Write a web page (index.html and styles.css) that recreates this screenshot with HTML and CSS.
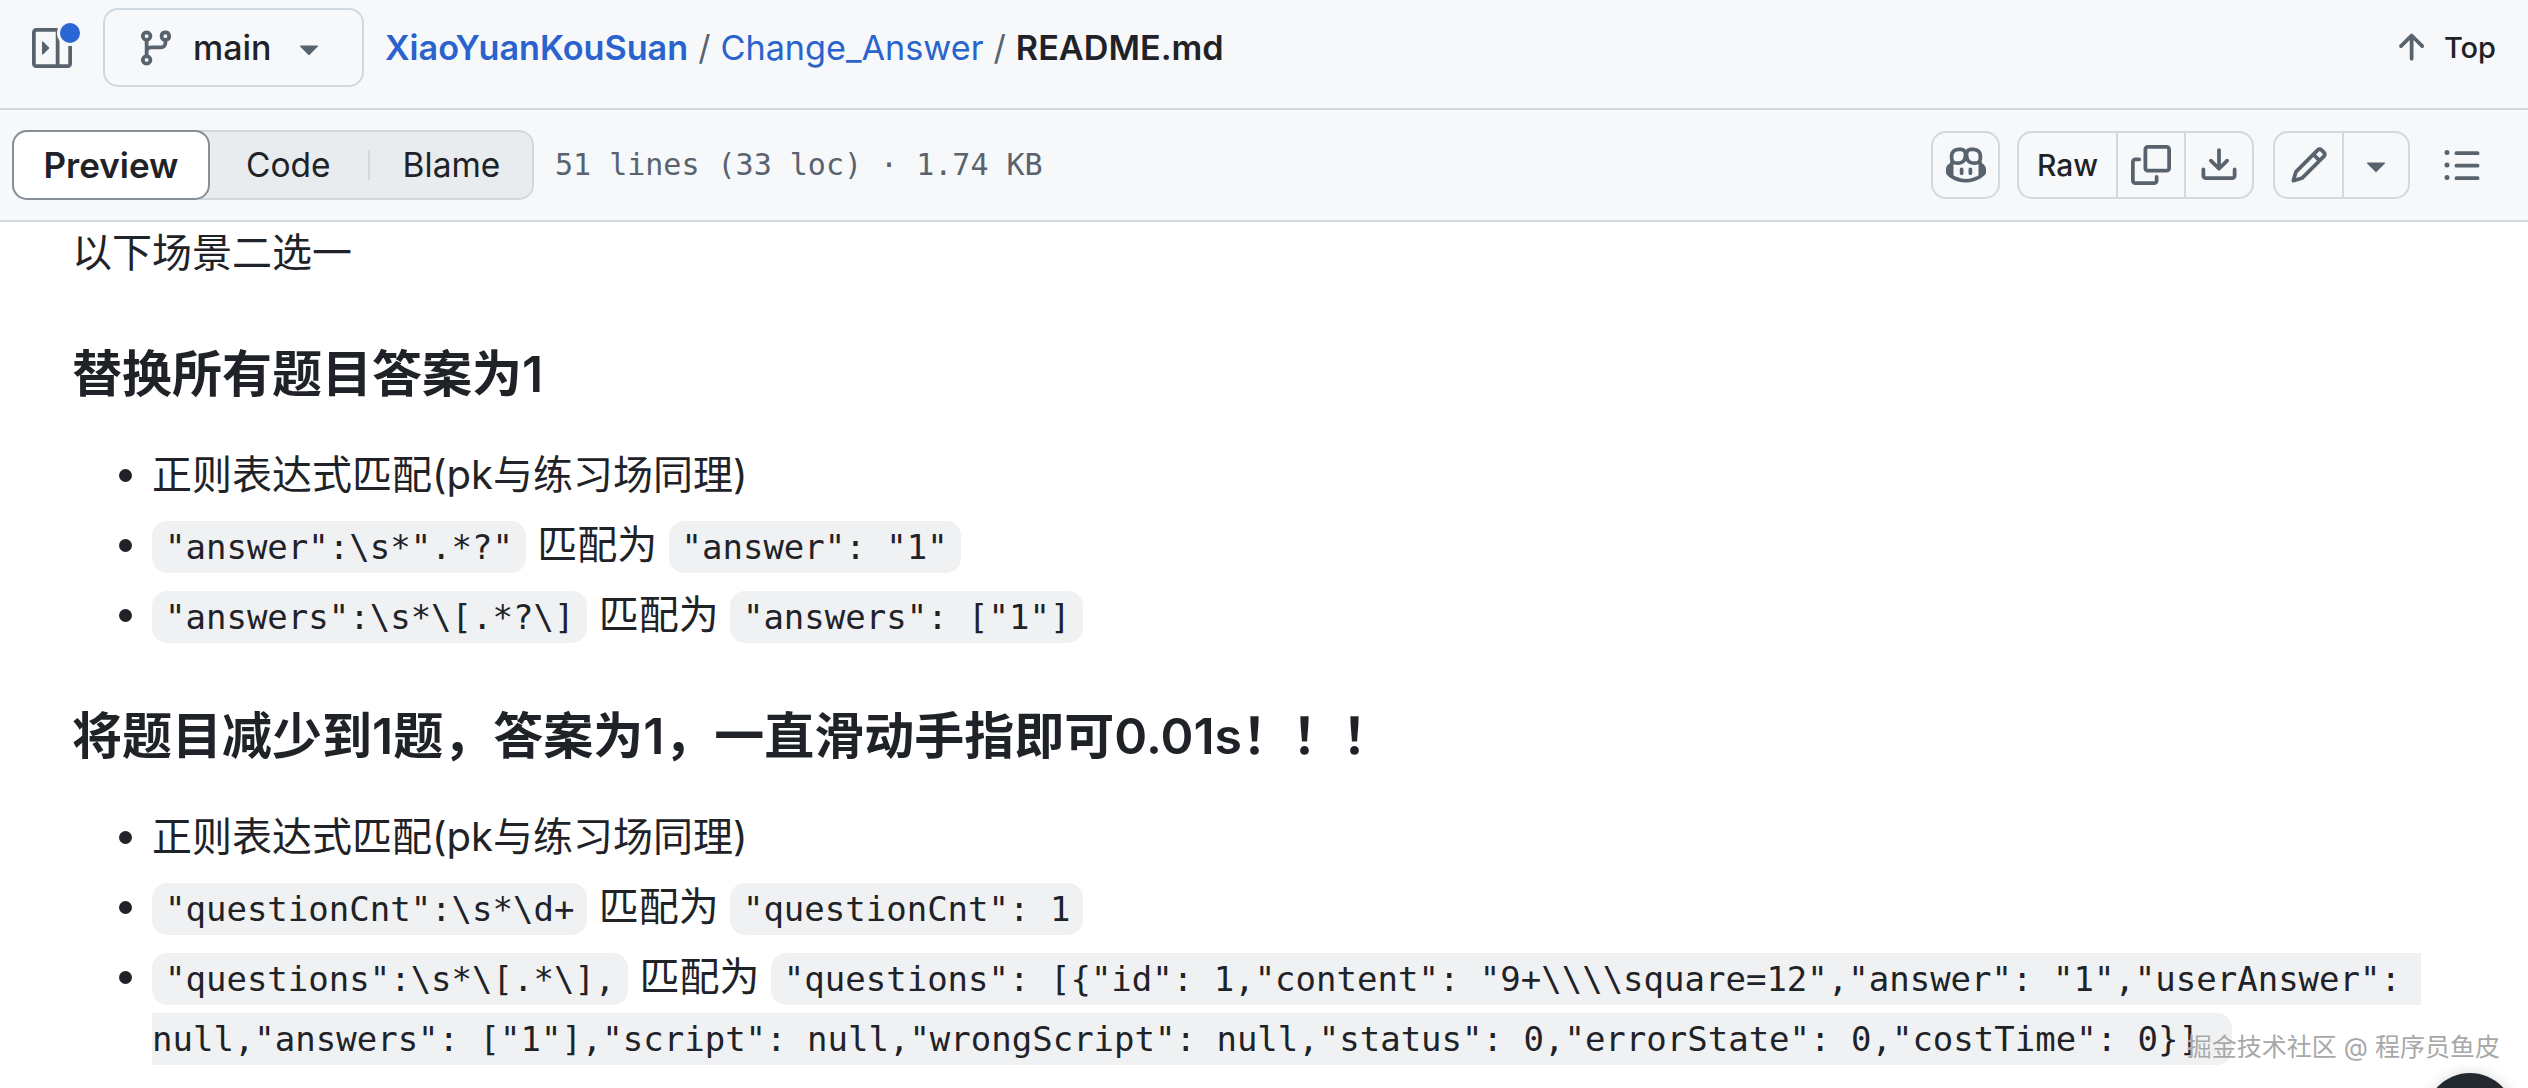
FILE: index.html
```html
<!DOCTYPE html>
<html lang="zh-CN">
<head>
  <meta charset="UTF-8">
  <title>Change_Answer/README.md at main</title>
  <link rel="stylesheet" href="styles.css">
</head>
<body>

  <header class="topbar">
    <div class="side-toggle">
      <svg class="icon muted" viewBox="0 0 16 16"><path d="M6.823 7.823a.25.25 0 0 1 0 .354l-2.396 2.396A.25.25 0 0 1 4 10.396V5.604a.25.25 0 0 1 .427-.177Z"/><path d="M1.75 0h12.5C15.216 0 16 .784 16 1.75v12.5A1.75 1.75 0 0 1 14.25 16H1.75A1.75 1.75 0 0 1 0 14.25V1.75C0 .784.784 0 1.75 0ZM1.5 1.75v12.5c0 .138.112.25.25.25H9.5v-13H1.75a.25.25 0 0 0-.25.25ZM11 14.5h3.25a.25.25 0 0 0 .25-.25V1.75a.25.25 0 0 0-.25-.25H11Z"/></svg>
      <span class="dot"></span>
    </div>
    <div class="branch">
      <svg class="icon muted" viewBox="0 0 16 16"><path d="M9.5 3.25a2.25 2.25 0 1 1 3 2.122V6A2.5 2.5 0 0 1 10 8.5H6a1 1 0 0 0-1 1v1.128a2.251 2.251 0 1 1-1.5 0V5.372a2.25 2.25 0 1 1 1.5 0v1.836A2.493 2.493 0 0 1 6 7h4a1 1 0 0 0 1-1v-.628A2.25 2.25 0 0 1 9.5 3.25Zm-6 0a.75.75 0 1 0 1.5 0 .75.75 0 0 0-1.5 0Zm8.25-.75a.75.75 0 1 0 0 1.5.75.75 0 0 0 0-1.5ZM4.25 12a.75.75 0 1 0 0 1.5.75.75 0 0 0 0-1.5Z"/></svg>
      <span class="branch-name">main</span>
      <svg class="icon muted" viewBox="0 0 16 16"><path d="m4.427 7.427 3.396 3.396a.25.25 0 0 0 .354 0l3.396-3.396A.25.25 0 0 0 11.396 7H4.604a.25.25 0 0 0-.177.427Z"/></svg>
    </div>
    <nav class="crumbs">
      <a class="repo">XiaoYuanKouSuan</a><span class="sep">/</span><a>Change_Answer</a><span class="sep">/</span><strong>README.md</strong>
    </nav>
    <div class="top-link">
      <svg class="icon muted" viewBox="0 0 16 16"><path d="M3.47 7.78a.75.75 0 0 1 0-1.06l4.25-4.25a.75.75 0 0 1 1.06 0l4.25 4.25a.751.751 0 0 1-.018 1.042.751.751 0 0 1-1.042.018L9 4.81v7.44a.75.75 0 0 1-1.5 0V4.81L4.53 7.78a.75.75 0 0 1-1.06 0Z"/></svg>
      <span>Top</span>
    </div>
  </header>

  <section class="filebar">
    <div class="tabs">
      <span class="tab active">Preview</span>
      <span class="tab code-tab">Code</span>
      <span class="tab-sep"></span>
      <span class="tab blame-tab">Blame</span>
    </div>
    <span class="meta">51 lines (33 loc) · 1.74 KB</span>
    <div class="actions">
      <div class="btn-group copilot">
        <span class="btn">
          <svg class="icon muted" viewBox="0 0 16 16"><path d="M7.998 15.035c-4.562 0-7.873-2.914-7.998-3.749V9.338c.085-.628.677-1.686 1.588-2.065.013-.07.024-.143.036-.218.029-.183.06-.384.126-.612-.201-.508-.254-1.084-.254-1.656 0-.87.128-1.769.693-2.484.579-.733 1.494-1.124 2.724-1.261 1.206-.134 2.262.034 2.944.765.05.053.096.108.139.165.044-.057.094-.112.143-.165.682-.731 1.738-.899 2.944-.765 1.23.137 2.145.528 2.724 1.261.566.715.693 1.614.693 2.484 0 .572-.053 1.148-.254 1.656.066.228.098.429.126.612.012.076.024.148.037.218.924.385 1.522 1.471 1.591 2.095v1.872c0 .766-3.351 3.795-8.002 3.795Zm0-1.485c2.28 0 4.584-1.11 5.002-1.433V7.862l-.023-.116c-.49.21-1.075.291-1.727.291-1.146 0-2.059-.327-2.71-.991A3.222 3.222 0 0 1 8 6.303a3.24 3.24 0 0 1-.544.743c-.65.664-1.563.991-2.71.991-.652 0-1.236-.081-1.727-.291l-.023.116v4.255c.419.323 2.722 1.433 5.002 1.433ZM6.762 2.83c-.193-.206-.637-.413-1.682-.297-1.019.113-1.479.404-1.713.7-.247.312-.369.789-.369 1.554 0 .793.129 1.171.308 1.371.162.181.519.379 1.442.379.853 0 1.339-.235 1.638-.54.315-.322.527-.827.617-1.553.117-.935-.037-1.395-.241-1.614Zm4.155-.297c-1.044-.116-1.488.091-1.681.297-.204.219-.359.679-.242 1.614.091.726.303 1.231.618 1.553.299.305.784.54 1.638.54.922 0 1.28-.198 1.442-.379.179-.2.308-.578.308-1.371 0-.765-.123-1.242-.37-1.554-.233-.296-.693-.587-1.713-.7Z"/><path d="M6.25 9.037a.75.75 0 0 1 .75.75v1.501a.75.75 0 0 1-1.5 0V9.787a.75.75 0 0 1 .75-.75Zm4.25.75v1.501a.75.75 0 0 1-1.5 0V9.787a.75.75 0 0 1 1.5 0Z"/></svg>
        </span>
      </div>
      <div class="btn-group">
        <span class="btn raw">Raw</span>
        <span class="btn copy">
          <svg class="icon muted" viewBox="0 0 16 16"><path d="M0 6.75C0 5.784.784 5 1.75 5h1.5a.75.75 0 0 1 0 1.5h-1.5a.25.25 0 0 0-.25.25v7.5c0 .138.112.25.25.25h7.5a.25.25 0 0 0 .25-.25v-1.5a.75.75 0 0 1 1.5 0v1.5A1.75 1.75 0 0 1 9.25 16h-7.5A1.75 1.75 0 0 1 0 14.25Z"/><path d="M5 1.75C5 .784 5.784 0 6.75 0h7.5C15.216 0 16 .784 16 1.75v7.5A1.75 1.75 0 0 1 14.25 11h-7.5A1.75 1.75 0 0 1 5 9.25Zm1.75-.25a.25.25 0 0 0-.25.25v7.5c0 .138.112.25.25.25h7.5a.25.25 0 0 0 .25-.25v-7.5a.25.25 0 0 0-.25-.25Z"/></svg>
        </span>
        <span class="btn download">
          <svg class="icon muted" viewBox="0 0 16 16"><path d="M2.75 14A1.75 1.75 0 0 1 1 12.25v-2.5a.75.75 0 0 1 1.5 0v2.5c0 .138.112.25.25.25h10.5a.25.25 0 0 0 .25-.25v-2.5a.75.75 0 0 1 1.5 0v2.5A1.75 1.75 0 0 1 13.25 14Z"/><path d="M7.25 7.689V2a.75.75 0 0 1 1.5 0v5.689l1.97-1.969a.749.749 0 1 1 1.06 1.06l-3.25 3.25a.749.749 0 0 1-1.06 0L4.22 6.78a.749.749 0 1 1 1.06-1.06l1.97 1.969Z"/></svg>
        </span>
      </div>
      <div class="btn-group">
        <span class="btn edit">
          <svg class="icon muted" viewBox="0 0 16 16"><path d="M11.013 1.427a1.75 1.75 0 0 1 2.474 0l1.086 1.086a1.75 1.75 0 0 1 0 2.474l-8.61 8.61c-.21.21-.47.364-.756.445l-3.251.93a.75.75 0 0 1-.927-.928l.929-3.25c.081-.286.235-.547.445-.758l8.61-8.61Zm.176 4.823L9.75 4.81l-6.286 6.287a.253.253 0 0 0-.064.108l-.558 1.953 1.953-.558a.253.253 0 0 0 .108-.064Zm1.238-3.763a.25.25 0 0 0-.354 0L10.811 3.75l1.439 1.44 1.263-1.263a.25.25 0 0 0 0-.354Z"/></svg>
        </span>
        <span class="btn caret">
          <svg class="icon muted" viewBox="0 0 16 16"><path d="m4.427 7.427 3.396 3.396a.25.25 0 0 0 .354 0l3.396-3.396A.25.25 0 0 0 11.396 7H4.604a.25.25 0 0 0-.177.427Z"/></svg>
        </span>
      </div>
      <svg class="icon muted outline" viewBox="0 0 16 16"><path d="M5.75 2.5h8.5a.75.75 0 0 1 0 1.5h-8.5a.75.75 0 0 1 0-1.5Zm0 5h8.5a.75.75 0 0 1 0 1.5h-8.5a.75.75 0 0 1 0-1.5Zm0 5h8.5a.75.75 0 0 1 0 1.5h-8.5a.75.75 0 0 1 0-1.5ZM2 14a1 1 0 1 1 0-2 1 1 0 0 1 0 2Zm1-6a1 1 0 1 1-2 0 1 1 0 0 1 2 0ZM2 4a1 1 0 1 1 0-2 1 1 0 0 1 0 2Z"/></svg>
    </div>
  </section>

  <main class="markdown">
    <p>以下场景二选一</p>

    <h2>替换所有题目答案为1</h2>
    <ul>
      <li>正则表达式匹配(pk与练习场同理)</li>
      <li><code>"answer":\s*".*?"</code> 匹配为 <code>"answer": "1"</code></li>
      <li><code>"answers":\s*\[.*?\]</code> 匹配为 <code>"answers": ["1"]</code></li>
    </ul>

    <h2>将题目减少到1题，答案为1，一直滑动手指即可0.01s！！！</h2>
    <ul>
      <li>正则表达式匹配(pk与练习场同理)</li>
      <li><code>"questionCnt":\s*\d+</code> 匹配为 <code>"questionCnt": 1</code></li>
      <li><code>"questions":\s*\[.*\],</code> 匹配为 <code>"questions": [{"id": 1,"content": "9+\\\\square=12","answer": "1","userAnswer": null,"answers": ["1"],"script": null,"wrongScript": null,"status": 0,"errorState": 0,"costTime": 0}] </code></li>
    </ul>
  </main>

  <div class="watermark">掘金技术社区 @ 程序员鱼皮</div>
  <div class="float-btn"></div>

</body>
</html>
```

FILE: styles.css
```css
* {
  box-sizing: border-box;
}

html, body {
  margin: 0;
  height: 1088px;
  overflow: hidden;
}

body {
  position: relative;
  background: #fff;
  color: #1f2328;
  font-family: Inter, "Noto Sans CJK SC", sans-serif;
  font-size: 40px;
  line-height: 60px;
}

.icon {
  display: block;
  width: 40px;
  height: 40px;
  flex: none;
  fill: #59636e;
}

/* top bar */
.topbar {
  display: flex;
  align-items: flex-start;
  height: 110px;
  padding: 8px 32px 0;
  background: #f6f8fa;
  border-bottom: 2px solid #d1d9e0;
}

.side-toggle {
  position: relative;
  width: 40px;
  height: 40px;
  margin-top: 20px;
}

.dot {
  position: absolute;
  top: -8px;
  right: -11px;
  width: 20px;
  height: 20px;
  background: #2a66d4;
  border: 3px solid #f6f8fa;
  border-radius: 50%;
  box-sizing: content-box;
}

.branch {
  display: flex;
  align-items: center;
  width: 261px;
  height: 79px;
  margin-left: 31px;
  padding-left: 31px;
  border: 2px solid #d1d9e0;
  border-radius: 15px;
  font-size: 34px;
  font-weight: 500;
}

.branch-name {
  margin-left: 17px;
  margin-right: 17px;
}

.crumbs {
  display: flex;
  align-items: center;
  height: 79px;
  margin-left: 21px;
  font-size: 34.2px;
  color: #1f2328;
}

.crumbs a {
  color: #2a63cd;
}

.crumbs .repo {
  font-weight: 600;
}

.crumbs strong {
  font-weight: 600;
}

.sep {
  margin: 0 10px;
  color: #59636e;
}

.top-link {
  display: flex;
  align-items: center;
  gap: 13px;
  height: 79px;
  margin-left: auto;
  font-size: 29px;
  font-weight: 500;
}

/* file toolbar */
.filebar {
  display: flex;
  align-items: center;
  height: 112px;
  padding: 0 46px 0 12px;
  background: #f6f8fa;
  border-bottom: 2px solid #d1d9e0;
}

.tabs {
  display: flex;
  align-items: center;
  width: 522px;
  height: 70px;
  background: #e9ecef;
  border: 2px solid #d1d9e0;
  border-radius: 15px;
  font-size: 33.5px;
}

.tab {
  line-height: 66px;
}

.tab.active {
  width: 198px;
  height: 70px;
  margin: -2px 0 -2px -2px;
  background: #fff;
  border: 2px solid #868e96;
  border-radius: 15px;
  font-size: 35px;
  font-weight: 600;
  text-align: center;
}

.code-tab {
  margin-left: 36px;
}

.tab-sep {
  width: 2px;
  height: 30px;
  margin-left: 37px;
  background: #d1d9e0;
}

.blame-tab {
  margin-left: 33px;
}

.meta {
  margin-left: 21px;
  color: #59636e;
  font-family: "DejaVu Sans Mono", monospace;
  font-size: 30px;
}

.actions {
  display: flex;
  align-items: center;
  gap: 19px;
  margin-left: auto;
}

.btn-group {
  display: flex;
  height: 68px;
  border: 2px solid #d1d9e0;
  border-radius: 15px;
}

.btn {
  display: flex;
  align-items: center;
  justify-content: center;
  height: 100%;
}

.btn + .btn {
  border-left: 2px solid #d1d9e0;
}

.copilot {
  margin-right: -2px;
}

.copilot .btn {
  width: 65px;
}

.raw {
  width: 97px;
  font-size: 30px;
  font-weight: 500;
}

.copy {
  width: 68px;
}

.download {
  width: 68px;
}

.edit {
  width: 67px;
}

.caret {
  width: 66px;
}

.outline {
  margin-left: 13px;
}

/* readme body */
.markdown {
  padding: 1px 48px 0 72px;
}

.markdown p {
  margin: 0 0 40px;
}

.markdown h2 {
  margin: 60px 0 40px;
  font-size: 50px;
  font-weight: 600;
  line-height: 62px;
}

.markdown ul {
  margin: 0 0 40px;
  padding-left: 80px;
}

.markdown li + li {
  margin-top: 10px;
}

.markdown code {
  padding: 6px 13px;
  background: #eff1f3;
  border-radius: 15px;
  font-family: "DejaVu Sans Mono", monospace;
  font-size: 34px;
  line-height: 40px;
  white-space: break-spaces;
}

/* overlays */
.watermark {
  position: absolute;
  right: 28px;
  bottom: 26px;
  color: #a8a8a8;
  font-size: 25px;
  line-height: 30px;
  text-shadow: 0 0 1px #fff;
}

.float-btn {
  position: absolute;
  top: 1073px;
  left: 2425px;
  width: 90px;
  height: 90px;
  background: #24292f;
  border-radius: 50%;
  box-shadow: 0 0 14px rgba(0, 0, 0, 0.15);
}
```
